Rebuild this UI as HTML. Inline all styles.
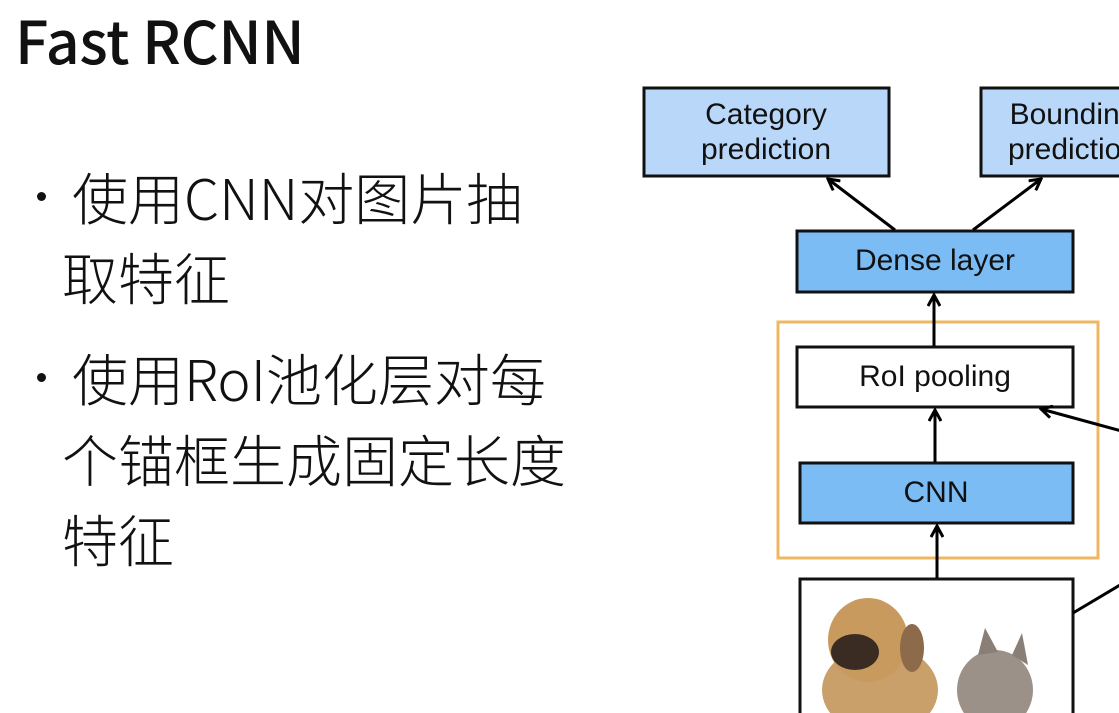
<!DOCTYPE html>
<html><head><meta charset="utf-8"><style>
body{margin:0;width:1119px;height:713px;background:#fff;overflow:hidden;position:relative;font-family:"Liberation Sans","Noto Sans CJK SC",sans-serif}
.t{position:absolute;left:15px;top:-4px;font-family:"Noto Sans CJK SC",sans-serif;font-weight:500;font-size:59px;color:#111;letter-spacing:-0.3px;white-space:nowrap}
.l{position:absolute;font-family:"Noto Sans CJK SC",sans-serif;font-weight:300;font-size:56px;line-height:60px;color:#111;white-space:nowrap}
.d{position:absolute;width:9px;height:9px;border-radius:50%;background:#111}
</style></head><body>
<div class="t">Fast RCNN</div>
<div class="d" style="left:37px;top:192px"></div>
<div class="l" style="left:72px;top:167px">使用CNN对图片抽</div>
<div class="l" style="left:62px;top:247px">取特征</div>
<div class="d" style="left:37px;top:373px"></div>
<div class="l" style="left:72px;top:348px">使用RoI池化层对每</div>
<div class="l" style="left:62px;top:429px">个锚框生成固定长度</div>
<div class="l" style="left:62px;top:509px">特征</div>
<svg width="1119" height="713" style="position:absolute;left:0;top:0" font-family="Liberation Sans, sans-serif">
<defs><marker id="a" markerWidth="14" markerHeight="14" refX="12" refY="7" orient="auto" markerUnits="userSpaceOnUse"><path d="M1,1 L12,7 L1,13" fill="none" stroke="#000" stroke-width="3"/></marker></defs>
<g stroke="#111" stroke-width="3">
<rect x="644" y="88" width="245" height="88" fill="#b9d7f8"/>
<rect x="981" y="88" width="150" height="88" fill="#b9d7f8"/>
<rect x="797" y="231" width="276" height="61" fill="#7bbcf5"/>
<rect x="797" y="347" width="276" height="60" fill="#fff"/>
<rect x="800" y="463" width="273" height="60" fill="#7bbcf5"/>
<rect x="800" y="579" width="273" height="140" fill="#fff"/>
</g>
<rect x="778" y="322" width="320" height="236" fill="none" stroke="#ecb862" stroke-width="3"/>
<g stroke="#000" stroke-width="3" fill="none">
<line x1="895" y1="230" x2="828" y2="179" marker-end="url(#a)"/>
<line x1="973" y1="230" x2="1041" y2="179" marker-end="url(#a)"/>
<line x1="934" y1="346" x2="934" y2="295" marker-end="url(#a)"/>
<line x1="935" y1="462" x2="935" y2="410" marker-end="url(#a)"/>
<line x1="937" y1="578" x2="937" y2="526" marker-end="url(#a)"/>
<line x1="1125" y1="432" x2="1041" y2="409" marker-end="url(#a)"/>
<line x1="1073" y1="613" x2="1125" y2="582"/>
</g>
<g fill="#111" font-size="30" text-anchor="middle">
<text x="766" y="124">Category</text><text x="766" y="159">prediction</text>
<text x="1073" y="124">Bounding</text><text x="1073" y="159">prediction</text>
<text x="935" y="270">Dense layer</text>
<text x="935" y="386">RoI pooling</text>
<text x="936" y="502">CNN</text>
</g>
<g>
<ellipse cx="880" cy="690" rx="58" ry="45" fill="#c9a06a"/>
<ellipse cx="868" cy="640" rx="40" ry="42" fill="#c99a5e"/>
<ellipse cx="855" cy="652" rx="24" ry="18" fill="#3a2c22"/>
<ellipse cx="912" cy="648" rx="12" ry="24" fill="#8d6a4a"/>
<ellipse cx="995" cy="690" rx="38" ry="40" fill="#9b9189"/>
<path d="M978 655 L985 628 L998 652Z M1012 655 L1022 633 L1028 665Z" fill="#8a7f76"/>
</g>
</svg>
</body></html>
